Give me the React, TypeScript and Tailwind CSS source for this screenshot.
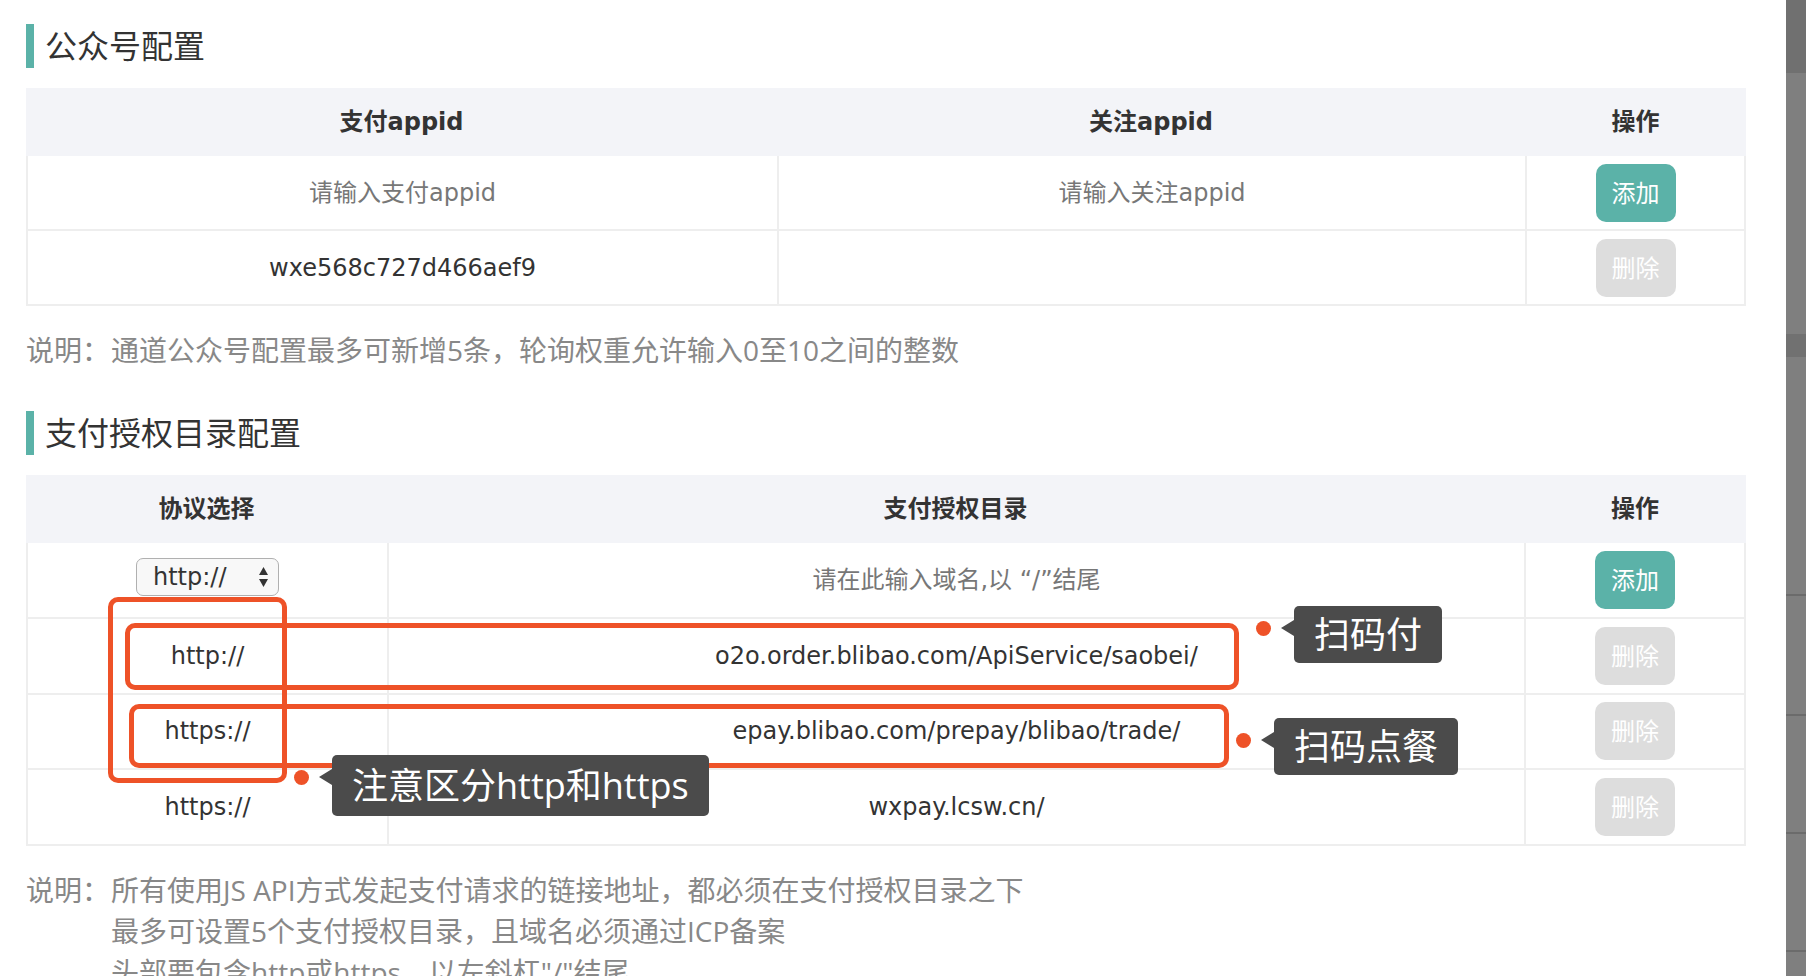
import React from "react";

const FONT = "font-['Open_Sans','Noto_Sans_CJK_SC',sans-serif]";
const TFONT = "font-['DejaVu_Sans','Noto_Sans_CJK_SC',sans-serif]";

function SectionTitle({ text }: { text: string }) {
  return (
    <div className="flex items-center h-[44px]">
      <div className="w-[8px] h-[44px] bg-[#5bb2a8]" />
      <div className="ml-[11px] text-[32px] leading-[44px] text-[#333333]">{text}</div>
    </div>
  );
}

function AddBtn() {
  return (
    <div className={"w-[80px] h-[58px] rounded-[10px] bg-[#5bb2a8] text-white text-[24px] flex items-center justify-center " + FONT}>
      添加
    </div>
  );
}

function DelBtn() {
  return (
    <div className={"w-[80px] h-[58px] rounded-[10px] bg-[#dddddd] text-white text-[24px] flex items-center justify-center " + FONT}>
      删除
    </div>
  );
}

function Tooltip({ text, className, boxH }: { text: string; className: string; boxH: string }) {
  return (
    <div className={"absolute flex items-start " + className}>
      <div className="w-[15px] h-[15px] rounded-full bg-[#ee5228] mr-[10px]" />
      <div className="w-0 h-0 border-y-[8px] border-y-transparent border-r-[13px] border-r-[#4b4b4b] -mt-[1px]" />
      <div className={"bg-[#4b4b4b] rounded-[5px] px-[20px] text-white text-[36px] -mt-[15px] whitespace-nowrap " + boxH}>
        {text}
      </div>
    </div>
  );
}

export default function App() {
  const rows2 = [
    { p: "http://", d: "o2o.order.blibao.com/ApiService/saobei/" },
    { p: "https://", d: "epay.blibao.com/prepay/blibao/trade/" },
    { p: "https://", d: "wxpay.lcsw.cn/" },
  ];
  return (
    <div className={"relative w-[1806px] h-[976px] overflow-hidden bg-white " + FONT}>
      <div className="flex">
        <div className="w-[1786px] h-[976px] pl-[26px] pt-[24px]">
          <SectionTitle text="公众号配置" />

          {/* Table 1 */}
          <div className={"mt-[20px] w-[1720px] " + TFONT}>
            <div className="flex h-[68px] bg-[#f3f4f8] text-[24px] font-bold text-[#333333]">
              <div className="w-[751px] flex items-center justify-center">支付appid</div>
              <div className="w-[748px] flex items-center justify-center">关注appid</div>
              <div className="flex-1 flex items-center justify-center">操作</div>
            </div>
            <div className="flex h-[75px] border-x-2 border-b-2 border-[#eeeeee] text-[24px]">
              <div className="w-[749px] flex items-center justify-center text-[#777777]">请输入支付appid</div>
              <div className="w-[748px] border-l-2 border-[#eeeeee] flex items-center justify-center text-[#777777]">请输入关注appid</div>
              <div className="flex-1 border-l-2 border-[#eeeeee] flex items-center justify-center"><AddBtn /></div>
            </div>
            <div className="flex h-[75px] border-x-2 border-b-2 border-[#eeeeee] text-[24px]">
              <div className="w-[749px] flex items-center justify-center text-[#333333]">wxe568c727d466aef9</div>
              <div className="w-[748px] border-l-2 border-[#eeeeee]" />
              <div className="flex-1 border-l-2 border-[#eeeeee] flex items-center justify-center"><DelBtn /></div>
            </div>
          </div>

          <div className="mt-[24px] flex text-[28px] leading-[41px] text-[#888888]">
            <span className="w-[85px] shrink-0">说明：</span>
            <span>通道公众号配置最多可新增5条，轮询权重允许输入0至10之间的整数</span>
          </div>

          <div className="mt-[40px]">
            <SectionTitle text="支付授权目录配置" />
          </div>

          {/* Table 2 */}
          <div className={"mt-[20px] w-[1720px] " + TFONT}>
            <div className="flex h-[68px] bg-[#f3f4f8] text-[24px] font-bold text-[#333333]">
              <div className="w-[361px] flex items-center justify-center">协议选择</div>
              <div className="w-[1137px] flex items-center justify-center">支付授权目录</div>
              <div className="flex-1 flex items-center justify-center">操作</div>
            </div>
            <div className="flex h-[75.75px] border-x-2 border-b-2 border-[#eeeeee] text-[24px]">
              <div className="w-[359px] flex items-center justify-center">
                <div className="mb-[5px] w-[143px] h-[38px] rounded-[7px] border-[1.5px] border-[#b0b0b0] bg-[#f8f8f8] flex items-center justify-between pl-[16px] pr-[9px] text-[#333333]">
                  <span className="leading-none">http://</span>
                  <svg width="11" height="22" viewBox="0 0 11 22">
                    <path d="M5.5 1 L10 9 L1 9 Z" fill="#333" />
                    <path d="M5.5 21 L10 13 L1 13 Z" fill="#333" />
                  </svg>
                </div>
              </div>
              <div className="w-[1137px] border-l-2 border-[#eeeeee] flex items-center justify-center text-[#777777]">
                请在此输入域名,以 “/”结尾
              </div>
              <div className="flex-1 border-l-2 border-[#eeeeee] flex items-center justify-center"><AddBtn /></div>
            </div>
            {rows2.map((r, i) => (
              <div key={i} className="flex h-[75.75px] border-x-2 border-b-2 border-[#eeeeee] text-[24px] text-[#333333]">
                <div className="w-[359px] flex items-center justify-center">{r.p}</div>
                <div className="w-[1137px] border-l-2 border-[#eeeeee] flex items-center justify-center">{r.d}</div>
                <div className="flex-1 border-l-2 border-[#eeeeee] flex items-center justify-center"><DelBtn /></div>
              </div>
            ))}
          </div>

          <div className="mt-[24px] flex text-[28px] leading-[41px] text-[#888888]">
            <span className="w-[85px] shrink-0">说明：</span>
            <div className="flex flex-col">
              <span>所有使用JS API方式发起支付请求的链接地址，都必须在支付授权目录之下</span>
              <span>最多可设置5个支付授权目录，且域名必须通过ICP备案</span>
              <span>头部要包含http或https，以左斜杠"/"结尾</span>
            </div>
          </div>
        </div>

        {/* right grey strip */}
        <div className="w-[20px] h-[976px] bg-[#7f7f7f] flex flex-col">
          <div className="h-[73px] bg-[#707070]" />
          <div className="h-[261px]" />
          <div className="h-[23px] bg-[#717171]" />
          <div className="h-[237px]" />
          <div className="h-[2px] bg-[#6b6b6b]" />
          <div className="h-[118px]" />
          <div className="h-[2px] bg-[#6b6b6b]" />
          <div className="h-[116px]" />
          <div className="h-[2px] bg-[#6b6b6b]" />
          <div className="h-[116px]" />
          <div className="h-[2px] bg-[#6b6b6b]" />
        </div>
      </div>

      {/* annotations */}
      <div className="absolute left-[108px] top-[597px] w-[179px] h-[186px] border-[5px] border-[#ee5228] rounded-[10px]" />
      <div className="absolute left-[125px] top-[623px] w-[1114px] h-[67px] border-[5px] border-[#ee5228] rounded-[10px]" />
      <div className="absolute left-[129px] top-[704px] w-[1100px] h-[64px] border-[5px] border-[#ee5228] rounded-[10px]" />

      <Tooltip text="扫码付" className="left-[1256px] top-[621px]" boxH="leading-[57px]" />
      <Tooltip text="扫码点餐" className="left-[1236px] top-[733px]" boxH="leading-[57px]" />
      <Tooltip text="注意区分http和https" className="left-[294px] top-[770px]" boxH="leading-[61px]" />
    </div>
  );
}
